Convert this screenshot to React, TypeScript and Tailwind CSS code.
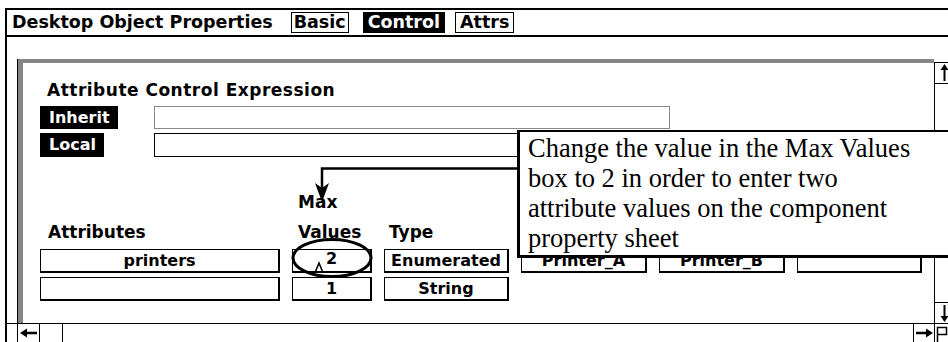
import React from "react";

// Desktop Object Properties sheet (Control tab) with an annotation callout.

function UpArrow() {
  return (
    <svg width="14" height="20" viewBox="0 0 14 20" className="block">
      <path d="M9.5 18V5" stroke="black" strokeWidth="2" />
      <path d="M5.5 7L9.5 1L13.5 7Z" fill="black" />
    </svg>
  );
}

function DownArrow() {
  return (
    <svg width="14" height="20" viewBox="0 0 14 20" className="block">
      <path d="M9.5 2V15" stroke="black" strokeWidth="2" />
      <path d="M5.5 13L9.5 19L13.5 13Z" fill="black" />
    </svg>
  );
}

function SideArrow({ dir }: { dir: "left" | "right" }) {
  return (
    <svg width="18" height="10" viewBox="0 0 18 10" className="block">
      {dir === "left" ? (
        <>
          <path d="M5 5H17" stroke="black" strokeWidth="2.5" />
          <path d="M0 5L7 0.5V9.5Z" fill="black" />
        </>
      ) : (
        <>
          <path d="M1 5H13" stroke="black" strokeWidth="2.5" />
          <path d="M18 5L11 0.5V9.5Z" fill="black" />
        </>
      )}
    </svg>
  );
}

function Cell({ children, className = "" }: { children?: React.ReactNode; className?: string }) {
  return (
    <div className={`flex h-[24px] items-center justify-center border border-b-2 border-r-2 border-black text-[16px] ${className}`}>
      {children}
    </div>
  );
}

export default function App() {
  return (
    <div className="relative h-[342px] w-[948px] overflow-hidden bg-white font-['DejaVu_Sans',sans-serif] font-bold text-black">
      <div className="flex h-full flex-col pl-[5px] pt-[8px]">
        <div className="flex min-h-0 flex-1 flex-col border-l-2 border-black">
          {/* title bar */}
          <div className="flex h-[29px] shrink-0 items-center border-y-2 border-black pl-[5px] text-[17.5px] leading-none">
            <span>Desktop Object Properties</span>
            <span className="ml-[18px] flex h-[21px] items-center border border-black px-[2px]">Basic</span>
            <span className="ml-[14px] flex h-[21px] items-center bg-black px-[5px] text-white">Control</span>
            <span className="ml-[10px] flex h-[21px] items-center border border-black px-[4px]">Attrs</span>
          </div>
          <div className="h-[22px] shrink-0" />

          {/* panel */}
          <div className="flex min-h-0 flex-1">
            <div className="w-[10px] shrink-0" />
            <div className="flex-1 border-l border-black">
              <div className="h-full border-l-[5px] border-t-4 border-[#858585] pl-[17px] pt-[17px]">
                <p className="ml-[7px] text-[17px] leading-[20px] tracking-[0.5px]">Attribute Control Expression</p>
                <div className="mt-[6px] flex flex-col gap-[4px] text-[16px]">
                  <div className="flex">
                    <div className="w-[114px]">
                      <span className="flex h-[23px] w-[78px] items-center bg-black pl-[9px] text-white">Inherit</span>
                    </div>
                    <div className="h-[23px] w-[516px] border border-[#8a8a8a]" />
                  </div>
                  <div className="flex">
                    <div className="w-[114px]">
                      <span className="flex h-[24px] w-[64px] items-center bg-black pl-[9px] text-white">Local</span>
                    </div>
                    <div className="h-[24px] w-[516px] border border-black" />
                  </div>
                </div>

                <div className="mt-[30px] grid grid-cols-[240px_80px_125px_126px_126px_125px] items-end gap-x-3 text-[17px] leading-[30px]">
                  <p className="pl-[8px]">Attributes</p>
                  <p className="pl-[6px]">
                    Max
                    <br />
                    Values
                  </p>
                  <p className="pl-[5px]">Type</p>
                </div>
                <div className="mt-[2px] grid grid-cols-[240px_80px_125px_126px_126px_125px] gap-x-3 gap-y-1">
                  <Cell>printers</Cell>
                  <Cell className="items-start leading-[18px]">2</Cell>
                  <Cell>Enumerated</Cell>
                  <Cell>Printer_A</Cell>
                  <Cell>Printer_B</Cell>
                  <Cell />
                  <Cell />
                  <Cell>1</Cell>
                  <Cell>String</Cell>
                </div>
              </div>
            </div>
            <div className="mt-[3px] flex w-[14px] shrink-0 flex-col justify-between border-l border-t border-black">
              <div className="h-[21px] border-b border-black">
                <UpArrow />
              </div>
              <div className="h-[21px] border-t border-black">
                <DownArrow />
              </div>
            </div>
          </div>

          {/* horizontal scrollbar */}
          <div className="flex h-[19px] shrink-0 border-t border-black">
            <div className="w-[10px] shrink-0" />
            <div className="flex w-[22px] shrink-0 items-center justify-center border-l border-black">
              <SideArrow dir="left" />
            </div>
            <div className="w-[24px] shrink-0 border-x border-black" />
            <div className="flex-1" />
            <div className="flex w-[21px] shrink-0 items-center justify-center border-l border-black">
              <SideArrow dir="right" />
            </div>
            <div className="w-[14px] shrink-0 border-l border-black">
              <svg width="14" height="19" viewBox="0 0 14 19" className="block">
                <path d="M2.5 19V3.5H11.5V10.5H2.5" stroke="black" strokeWidth="1.5" fill="none" />
              </svg>
            </div>
          </div>
        </div>
      </div>

      {/* annotation marks */}
      <svg className="pointer-events-none absolute left-0 top-0" width="948" height="342" viewBox="0 0 948 342">
        <path d="M518 168.5H322V190" stroke="black" strokeWidth="2.5" fill="none" />
        <path d="M315 183L322 188L329 183L322 202Z" fill="black" />
        <ellipse cx="332" cy="258" rx="39" ry="18.5" stroke="black" strokeWidth="3" fill="none" />
        <path d="M315.5 271.5L319 263L322.5 271.5" stroke="black" strokeWidth="1.6" fill="none" />
      </svg>

      {/* callout */}
      <div className="absolute left-[517px] top-[130px] h-[128px] w-[440px] border-b-[3px] border-l-[3px] border-t-2 border-black bg-white pl-[8px] pt-[1px] font-['Liberation_Serif',serif] text-[26.5px] font-normal leading-[30px]">
        <p className="whitespace-nowrap">Change the value in the Max Values</p>
        <p className="whitespace-nowrap">box to 2 in order to enter two</p>
        <p className="whitespace-nowrap">attribute values on the component</p>
        <p className="whitespace-nowrap">property sheet</p>
      </div>
    </div>
  );
}
